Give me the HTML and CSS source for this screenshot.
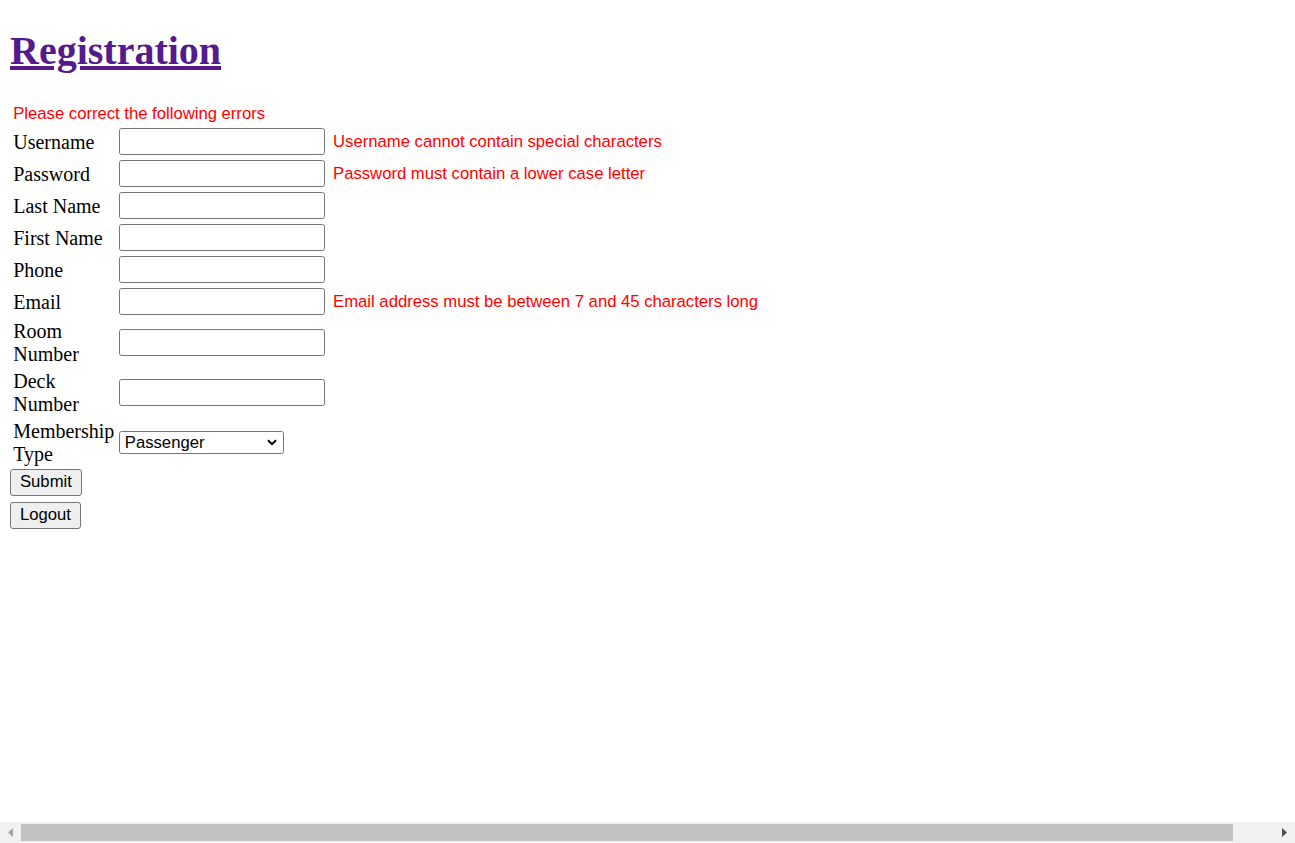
FILE: index.html
```html
<!DOCTYPE html>
<html lang="en">
<head>
<meta charset="utf-8">
<title>Registration</title>
<link rel="stylesheet" href="styles.css">
</head>
<body class="page">
<h1 class="title"><a class="title-link" href="#">Registration</a></h1>
<form class="reg-form">
  <table class="reg-table">
    <tr><td colspan="3" class="error summary">Please correct the following errors</td></tr>
    <tr><td class="label">Username</td><td class="field"><input class="text-input" type="text"></td><td class="error msg">Username cannot contain special characters</td></tr>
    <tr><td class="label">Password</td><td class="field"><input class="text-input" type="password"></td><td class="error msg">Password must contain a lower case letter</td></tr>
    <tr><td class="label">Last Name</td><td class="field"><input class="text-input" type="text"></td><td class="error msg"></td></tr>
    <tr><td class="label">First Name</td><td class="field"><input class="text-input" type="text"></td><td class="error msg"></td></tr>
    <tr><td class="label">Phone</td><td class="field"><input class="text-input" type="text"></td><td class="error msg"></td></tr>
    <tr><td class="label">Email</td><td class="field"><input class="text-input" type="text"></td><td class="error msg">Email address must be between 7 and 45 characters long</td></tr>
    <tr><td class="label">Room Number</td><td class="field"><input class="text-input" type="text"></td><td class="error msg"></td></tr>
    <tr><td class="label">Deck Number</td><td class="field"><input class="text-input" type="text"></td><td class="error msg"></td></tr>
    <tr><td class="label">Membership Type</td><td class="field">
      <span class="select-wrap">
        <select class="select"><option>Passenger</option><option>Crew</option></select>
        <svg class="chevron" width="10" height="7" viewBox="0 0 10 7" aria-hidden="true"><path d="M1 1.2 L5 5.2 L9 1.2" fill="none" stroke="#000" stroke-width="2"/></svg>
      </span>
    </td><td class="error msg"></td></tr>
  </table>
  <div class="actions">
    <button class="btn" type="button">Submit</button>
    <button class="btn" type="button">Logout</button>
  </div>
</form>
<div class="hscroll" aria-hidden="true">
  <div class="hscroll-btn">
    <svg width="5" height="9" viewBox="0 0 5 9"><path d="M5 0 L0 4.5 L5 9 Z" fill="#a3a3a3"/></svg>
  </div>
  <div class="hscroll-track"><div class="hscroll-thumb"></div></div>
  <div class="hscroll-btn">
    <svg width="5" height="9" viewBox="0 0 5 9"><path d="M0 0 L5 4.5 L0 9 Z" fill="#505050"/></svg>
  </div>
</div>
</body>
</html>
```

FILE: styles.css
```css
html, body {
  background: #ffffff;
}
.page {
  margin: 10px;
  font-family: "Liberation Serif", "Times New Roman", serif;
  font-size: 20px;
  color: #000000;
}
.title {
  font-size: 40px;
  font-weight: bold;
  margin: 17px 0 26.8px;
}
.title-link {
  color: #551a8b;
  text-decoration: underline;
}
.reg-form {
  margin: 0;
}
.reg-table {
  border-collapse: separate;
  border-spacing: 2px;
}
.reg-table td {
  padding: 1.5px 1.25px;
}
.reg-table .summary {
  padding-bottom: 0.5px;
}
.label {
  width: 101px;
  line-height: 22.5px;
}
.error {
  font-family: "Liberation Sans", Arial, sans-serif;
  font-size: 16.67px;
  color: #ff0000;
  white-space: nowrap;
}
.reg-table .msg {
  padding-left: 5px;
}
.text-input {
  display: block;
  box-sizing: border-box;
  width: 206px;
  height: 27px;
  margin: 0;
  padding: 1.25px 2.5px;
  border: 1px solid #767676;
  border-radius: 2.5px;
  background: #ffffff;
  font-family: "Liberation Sans", Arial, sans-serif;
  font-size: 16.67px;
}
.select-wrap {
  position: relative;
  display: block;
  width: 165px;
}
.select {
  display: block;
  box-sizing: border-box;
  width: 165px;
  height: 23px;
  margin: 0;
  padding: 0 0 0 5px;
  border: 1px solid #767676;
  border-radius: 2.5px;
  background: #ffffff;
  color: #000000;
  font-family: "Liberation Sans", Arial, sans-serif;
  font-size: 16.67px;
  appearance: none;
  -webkit-appearance: none;
}
.chevron {
  position: absolute;
  left: 148px;
  top: 8px;
  pointer-events: none;
}
.actions {
  display: flex;
  flex-direction: column;
  align-items: flex-start;
  gap: 6px;
}
.btn {
  box-sizing: border-box;
  height: 27px;
  margin: 0;
  padding: 0 9px;
  border: 1px solid #767676;
  border-radius: 3px;
  background: #efefef;
  color: #000000;
  font-family: "Liberation Sans", Arial, sans-serif;
  font-size: 16.67px;
}
.hscroll {
  position: fixed;
  left: 0;
  right: 0;
  bottom: 0;
  height: 21px;
  display: flex;
  background: #f1f1f1;
}
.hscroll-btn {
  width: 21px;
  flex: none;
  display: flex;
  align-items: center;
  justify-content: center;
}
.hscroll-track {
  flex: 1;
  display: flex;
  align-items: center;
}
.hscroll-thumb {
  width: 1212px;
  height: 17px;
  background: #c1c1c1;
}
```
